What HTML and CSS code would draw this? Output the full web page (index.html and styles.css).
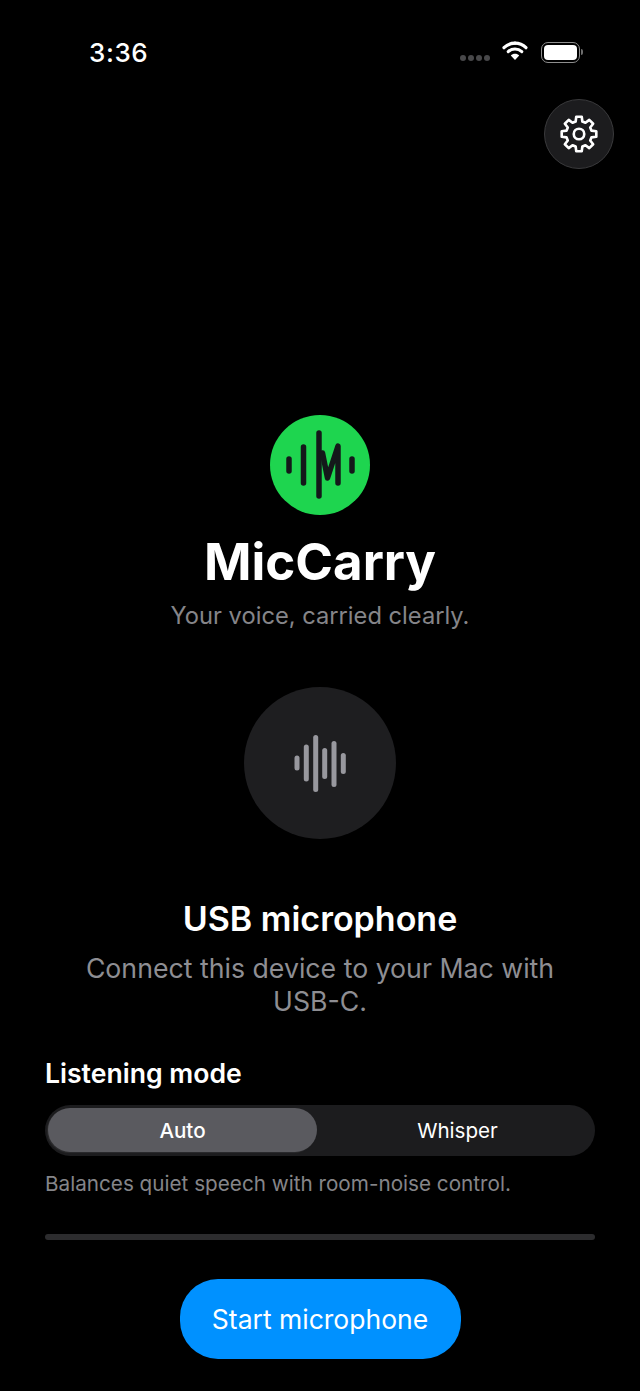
FILE: index.html
```html
<!DOCTYPE html>
<html lang="en">
<head>
<meta charset="utf-8">
<title>MicCarry</title>
<link rel="stylesheet" href="styles.css">
</head>
<body>
<main class="screen">
  <header class="status">
    <span class="time">3:36</span>
    <div class="status-icons">
      <div class="dots"><i></i><i></i><i></i><i></i></div>
      <svg class="wifi" width="28" height="21" viewBox="0 0 28 21"><path d="M14 3.2c4.300 0 8.100 1.700 11 4.500" fill="none" stroke="#fff" stroke-width="3.200" stroke-linecap="round"/><path d="M14 3.200c-4.300 0-8.100 1.700-11 4.500" fill="none" stroke="#fff" stroke-width="3.200" stroke-linecap="round"/><path d="M7.200 11.600c1.800-1.700 4.200-2.700 6.800-2.700s5 1 6.800 2.700" fill="none" stroke="#fff" stroke-width="3" stroke-linecap="round"/><path d="M14 20l-4.200-4.600c1.100-1 2.600-1.600 4.200-1.600s3.100.6 4.200 1.600z" fill="#fff"/></svg>
      <div class="battery"><div class="battery-body"><div class="battery-fill"></div></div><div class="battery-cap"></div></div>
    </div>
  </header>
  <div class="toolbar">
    <button class="settings" aria-label="Settings">
      <svg width="42" height="42" viewBox="0 0 24 24" fill="none" stroke="#fff" stroke-width="1.500" stroke-linejoin="round"><path d="M10.080 4.850L10.440 2.120H13.560L13.920 4.850L15.700 5.590L17.880 3.910L20.090 6.120L18.410 8.300L19.150 10.080L21.880 10.440V13.560L19.150 13.920L18.410 15.700L20.090 17.880L17.880 20.090L15.700 18.410L13.920 19.150L13.560 21.880H10.440L10.080 19.150L8.300 18.410L6.120 20.090L3.910 17.880L5.590 15.700L4.850 13.920L2.120 13.560V10.440L4.850 10.080L5.590 8.300L3.910 6.120L6.120 3.910L8.300 5.590Z"/><circle cx="12" cy="12" r="3"/></svg>
    </button>
  </div>
  <section class="hero">
    <svg class="logo" width="100" height="100" viewBox="0 0 100 100">
      <circle cx="50" cy="50" r="50" fill="#1ed54f"/>
      <g fill="none" stroke="#14181a" stroke-width="5.500" stroke-linecap="round" stroke-linejoin="round">
        <path d="M19 44v12"/><path d="M33.500 32v36"/><path d="M49 18v63"/>
        <path d="M52.500 38l5 25 10.500-32v37"/><path d="M82 44v12"/>
      </g>
    </svg>
    <h1 class="title">MicCarry</h1>
    <p class="tagline">Your voice, carried clearly.</p>
    <div class="mic-disc">
      <svg width="60" height="62" viewBox="0 0 60 62" fill="none" stroke="#98989e" stroke-width="5" stroke-linecap="round">
        <path d="M7 26v10"/><path d="M16.300 15v32"/><path d="M25.700 5.500v52"/><path d="M34.700 18.500v26"/><path d="M44 11.500v41"/><path d="M53.300 23.500v16"/>
      </svg>
    </div>
    <h2 class="state">USB microphone</h2>
    <p class="hint">Connect this device to your Mac with USB-C.</p>
  </section>
  <section class="mode">
    <h3 class="mode-label">Listening mode</h3>
    <div class="segments">
      <div class="segment segment-on">Auto</div>
      <div class="segment">Whisper</div>
    </div>
    <p class="mode-note">Balances quiet speech with room-noise control.</p>
  </section>
  <div class="progress"></div>
  <div class="actions"><button class="start">Start microphone</button></div>
</main>
</body>
</html>
```
FILE: styles.css
```css
* { box-sizing: border-box; margin: 0; padding: 0; }
html, body { background: #000; }
body { width: 640px; height: 1391px; overflow: hidden; font-family: Inter, "Noto Sans", sans-serif; color: #fff; }
.screen { display: flex; flex-direction: column; height: 1391px; padding: 0 45px; }
.status { display: flex; justify-content: space-between; align-items: center; height: 48px; margin: 28px 12px 0 44px; }
.time { font-size: 26px; font-weight: 500; letter-spacing: 0.6px; }
.status-icons { display: flex; align-items: center; }
.dots { display: flex; gap: 2px; margin-right: 11px; margin-top: 12px; }
.dots i { width: 6px; height: 6px; border-radius: 50%; background: #48484a; }
.wifi { margin-right: 12px; margin-top: -3px; }
.battery { display: flex; align-items: center; gap: 1px; }
.battery-body { width: 39px; height: 21px; border: 1.500px solid #8e8e8e; border-radius: 7px; padding: 2px; }
.battery-fill { height: 100%; background: #fff; border-radius: 4px; }
.battery-cap { width: 2px; height: 6px; background: #6e6e6e; border-radius: 0 2px 2px 0; }
.toolbar { display: flex; justify-content: flex-end; margin: 23px -19px 0 0; }
.settings { width: 70px; height: 70px; border-radius: 50%; background: #1c1c1e; border: 1px solid #3a3a3c; display: flex; align-items: center; justify-content: center; }
.hero { display: flex; flex-direction: column; align-items: center; margin-top: 246px; }
.logo { display: block; }
.title { font-size: 51px; line-height: 63px; font-weight: 700; margin-top: 15px; }
.tagline { font-size: 23.700px; line-height: 28px; color: #858589; margin-top: 9px; }
.mic-disc { width: 152px; height: 152px; border-radius: 50%; background: #1e1e20; margin-top: 57px; display: flex; align-items: center; justify-content: center; }
.state { font-size: 34px; line-height: 40px; font-weight: 600; margin-top: 60px; }
.hint { font-size: 26.700px; line-height: 33px; color: #8e8e93; text-align: center; width: 500px; margin-top: 13px; }
.mode { margin-top: 39px; }
.mode-label { font-size: 26.600px; line-height: 32px; font-weight: 600; }
.segments { display: grid; grid-template-columns: 269px 269px; gap: 6px; height: 51px; padding: 3px; margin-top: 16px; border-radius: 26px; background: #1c1c1e; }
.segment { display: flex; align-items: center; justify-content: center; border-radius: 22px; font-size: 20.600px; font-weight: 400; height: 44px; }
.segment-on { background: #5a5a5f; font-weight: 500; box-shadow: -1px 1px 1px #2c2c2e; }
.mode-note { font-size: 20.700px; line-height: 26px; color: #858589; margin-top: 15px; }
.progress { height: 6px; border-radius: 3px; background: #2c2c2e; margin-top: 37px; }
.actions { display: flex; justify-content: center; margin-top: 39px; }
.start { width: 281px; height: 80px; border: 0; border-radius: 38px; background: #0091ff; color: #fff; font-family: Inter, sans-serif; font-size: 26.500px; font-weight: 400; }
```
